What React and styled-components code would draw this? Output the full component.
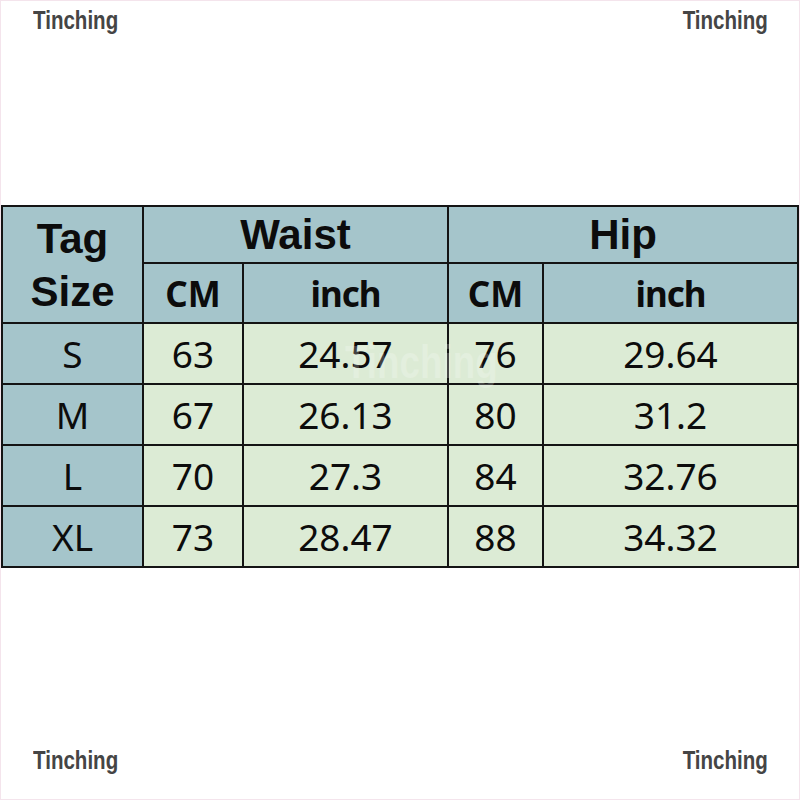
import React from "react";
import styled, { createGlobalStyle } from "styled-components";

const Global = createGlobalStyle`
  html, body { margin: 0; padding: 0; background: #ffffff; }
  * { box-sizing: border-box; }
`;

const Page = styled.div`
  width: 800px;
  height: 800px;
  border: 1px solid #f4e4ec;
  background: #ffffff;
  display: flex;
  flex-direction: column;
`;

const CornerBar = styled.div`
  display: flex;
  justify-content: space-between;
  padding: ${(p) => (p.$bottom ? "0 31px 26px 32px" : "6px 31px 0 32px")};
  margin-top: ${(p) => (p.$bottom ? "auto" : "0")};
`;

const Mark = styled.span`
  display: inline-block;
  font-family: "Liberation Sans", Arial, sans-serif;
  font-weight: 700;
  font-size: 26px;
  line-height: 26px;
  color: #454545;
  transform: scaleX(0.79);
  transform-origin: ${(p) => (p.$right ? "right" : "left")} center;
  white-space: nowrap;
`;

const Table = styled.div`
  position: relative;
  margin-top: 172px;
  width: 798px;
  display: grid;
  grid-template-columns: 139px 98px 203px 93px 253px;
  grid-template-rows: 55px 58px 59px 59px 59px 59px;
  gap: 2px;
  padding: 2px;
  background: #141414;
`;

const Cell = styled.div`
  display: flex;
  align-items: center;
  justify-content: center;
  text-align: center;
  background: ${(p) => (p.$head ? "#a5c5cb" : "#dcebd5")};
  color: #0c0c0c;
  grid-row: ${(p) => (p.$rows ? `span ${p.$rows}` : "auto")};
  grid-column: ${(p) => (p.$cols ? `span ${p.$cols}` : "auto")};
`;

const Title = styled.span`
  font-family: "Liberation Sans", Arial, sans-serif;
  font-weight: 700;
  font-size: 42px;
  line-height: 53px;
`;

const Unit = styled.span`
  font-family: "Noto Sans", sans-serif;
  font-weight: 700;
  font-size: 35px;
  letter-spacing: ${(p) => (p.$tight ? "-1px" : "0")};
  line-height: 1;
`;

const Value = styled.span`
  font-family: "Noto Sans", sans-serif;
  font-weight: 400;
  font-size: 37px;
  line-height: 1;
`;

const Watermark = styled.span`
  position: absolute;
  left: 344px;
  top: 130px;
  font-family: "Liberation Sans", Arial, sans-serif;
  font-weight: 700;
  font-size: 46px;
  color: rgba(255, 255, 255, 0.22);
  transform: scaleX(0.8);
  transform-origin: left center;
  pointer-events: none;
`;

const rows = [
  ["S", "63", "24.57", "76", "29.64"],
  ["M", "67", "26.13", "80", "31.2"],
  ["L", "70", "27.3", "84", "32.76"],
  ["XL", "73", "28.47", "88", "34.32"],
];

export default function App() {
  return (
    <>
      <Global />
      <Page>
        <CornerBar>
          <Mark>Tinching</Mark>
          <Mark $right>Tinching</Mark>
        </CornerBar>
        <Table>
          <Cell $head $rows={2}>
            <Title>
              Tag
              <br />
              Size
            </Title>
          </Cell>
          <Cell $head $cols={2}>
            <Title>Waist</Title>
          </Cell>
          <Cell $head $cols={2}>
            <Title>Hip</Title>
          </Cell>
          <Cell $head>
            <Unit>CM</Unit>
          </Cell>
          <Cell $head>
            <Unit $tight>inch</Unit>
          </Cell>
          <Cell $head>
            <Unit>CM</Unit>
          </Cell>
          <Cell $head>
            <Unit $tight>inch</Unit>
          </Cell>
          {rows.map((r) => (
            <React.Fragment key={r[0]}>
              <Cell $head>
                <Value>{r[0]}</Value>
              </Cell>
              {r.slice(1).map((v, i) => (
                <Cell key={i}>
                  <Value>{v}</Value>
                </Cell>
              ))}
            </React.Fragment>
          ))}
          <Watermark>Tinching</Watermark>
        </Table>
        <CornerBar $bottom>
          <Mark>Tinching</Mark>
          <Mark $right>Tinching</Mark>
        </CornerBar>
      </Page>
    </>
  );
}
